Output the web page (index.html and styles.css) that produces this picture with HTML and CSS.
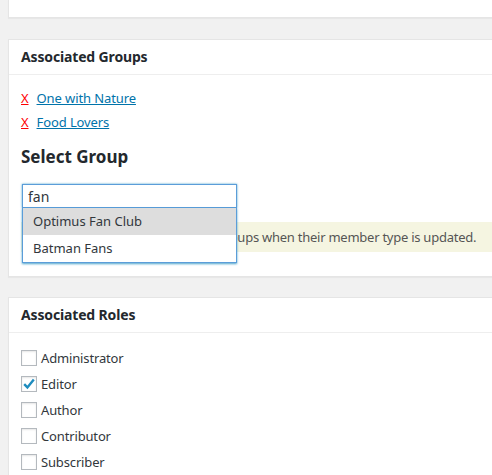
FILE: index.html
```html
<!DOCTYPE html>
<html>
<head>
<meta charset="utf-8">
<link rel="stylesheet" href="styles.css">
</head>
<body>
<div class="page">
  <div class="postbox top-box"></div>

  <div class="postbox">
    <h2 class="hndle">Associated Groups</h2>
    <div class="inside groups">
      <ul class="group-list">
        <li><a class="remove" href="#">X</a><a class="glink" href="#">One with Nature</a></li>
        <li><a class="remove" href="#">X</a><a class="glink" href="#">Food Lovers</a></li>
      </ul>
      <h3 class="select-title">Select Group</h3>
      <div class="search-wrap">
        <input class="search" type="text" value="fan">
        <ul class="autocomplete">
          <li class="active">Optimus Fan Club</li>
          <li>Batman Fans</li>
        </ul>
      </div>
      <p class="notice">Users will be removed from groups when their member type is updated.</p>
    </div>
  </div>

  <div class="postbox">
    <h2 class="hndle">Associated Roles</h2>
    <div class="inside roles">
      <label class="role"><span class="cb"></span>Administrator</label>
      <label class="role"><span class="cb checked"><svg viewBox="0 0 16 16" width="16" height="16"><path d="M3.2 8.2 L6.4 11.4 L12.8 3.6" fill="none" stroke="#1e8cbe" stroke-width="2.4" stroke-linejoin="miter"/></svg></span>Editor</label>
      <label class="role"><span class="cb"></span>Author</label>
      <label class="role"><span class="cb"></span>Contributor</label>
      <label class="role"><span class="cb"></span>Subscriber</label>
    </div>
  </div>
</div>
</body>
</html>
```

FILE: styles.css
```css
html, body {
  margin: 0;
  padding: 0;
  background: #f1f1f1;
  font-family: "Noto Sans", "Open Sans", sans-serif;
  color: #444;
  overflow: hidden;
}

.page {
  padding-left: 8px;
  margin-right: -20px;
}

.postbox {
  background: #fff;
  border: 1px solid #e5e5e5;
  box-shadow: 0 1px 1px rgba(0, 0, 0, 0.04);
  margin-bottom: 20px;
}

.top-box {
  height: 17px;
  border-top: none;
  margin-bottom: 21px;
}

.hndle {
  margin: 0;
  font-size: 14px;
  font-weight: 700;
  line-height: 20px;
  color: #23282d;
  padding: 7px 12px 7px 12px;
  border-bottom: 1px solid #eee;
  letter-spacing: -0.15px;
}

.inside {
  padding: 11px 12px 12px 12px;
}

.groups {
  padding-bottom: 24px;
}

.group-list {
  list-style: none;
  margin: 0;
  padding: 0;
}

.group-list li {
  height: 24px;
  line-height: 24px;
  font-size: 13px;
  letter-spacing: -0.1px;
}

.remove {
  color: #f00;
  text-decoration: underline;
  margin-right: 8px;
}

.glink {
  color: #0073aa;
  text-decoration: underline;
}

.select-title {
  margin: 12px 0 16px 0;
  font-size: 17px;
  line-height: 22px;
  font-weight: 700;
  color: #23282d;
}

.search-wrap {
  position: relative;
  width: 215px;
  margin-left: 1px;
}

.search {
  display: block;
  box-sizing: border-box;
  width: 215px;
  height: 24px;
  margin: 0;
  border: 1px solid #5b9dd9;
  box-shadow: 0 0 2px rgba(30, 140, 190, 0.8);
  padding: 0 5px;
  font-family: inherit;
  font-size: 14px;
  color: #32373c;
  outline: none;
}

.autocomplete {
  position: absolute;
  left: 0;
  top: 24px;
  width: 215px;
  box-sizing: border-box;
  margin: 0;
  padding: 0;
  list-style: none;
  background: #fff;
  border: 1px solid #5b9dd9;
  border-top: none;
  box-shadow: 0 1px 2px rgba(30, 140, 190, 0.8);
  z-index: 2;
}

.autocomplete li {
  height: 27px;
  line-height: 27px;
  padding-left: 10px;
  font-size: 13px;
  color: #32373c;
}

.autocomplete li.active {
  background: #ddd;
}

.notice {
  margin: 14px 0 0 0;
  background: #f5f5e1;
  height: 30px;
  line-height: 30px;
  font-size: 13px;
  letter-spacing: -0.25px;
  color: #555;
  padding-left: 32px;
  white-space: nowrap;
  margin-right: -30px;
}

.roles {
  padding-top: 12px;
}

.role {
  display: flex;
  align-items: center;
  height: 26px;
  font-size: 13px;
  letter-spacing: -0.15px;
  color: #32373c;
}

.cb {
  box-sizing: border-box;
  width: 16px;
  height: 16px;
  border: 1px solid #b4b9be;
  background: #fff;
  box-shadow: inset 0 1px 2px rgba(0, 0, 0, 0.1);
  margin-right: 4px;
  display: flex;
  align-items: center;
  justify-content: center;
}

.cb svg {
  display: block;
  margin: -1px;
}
```
